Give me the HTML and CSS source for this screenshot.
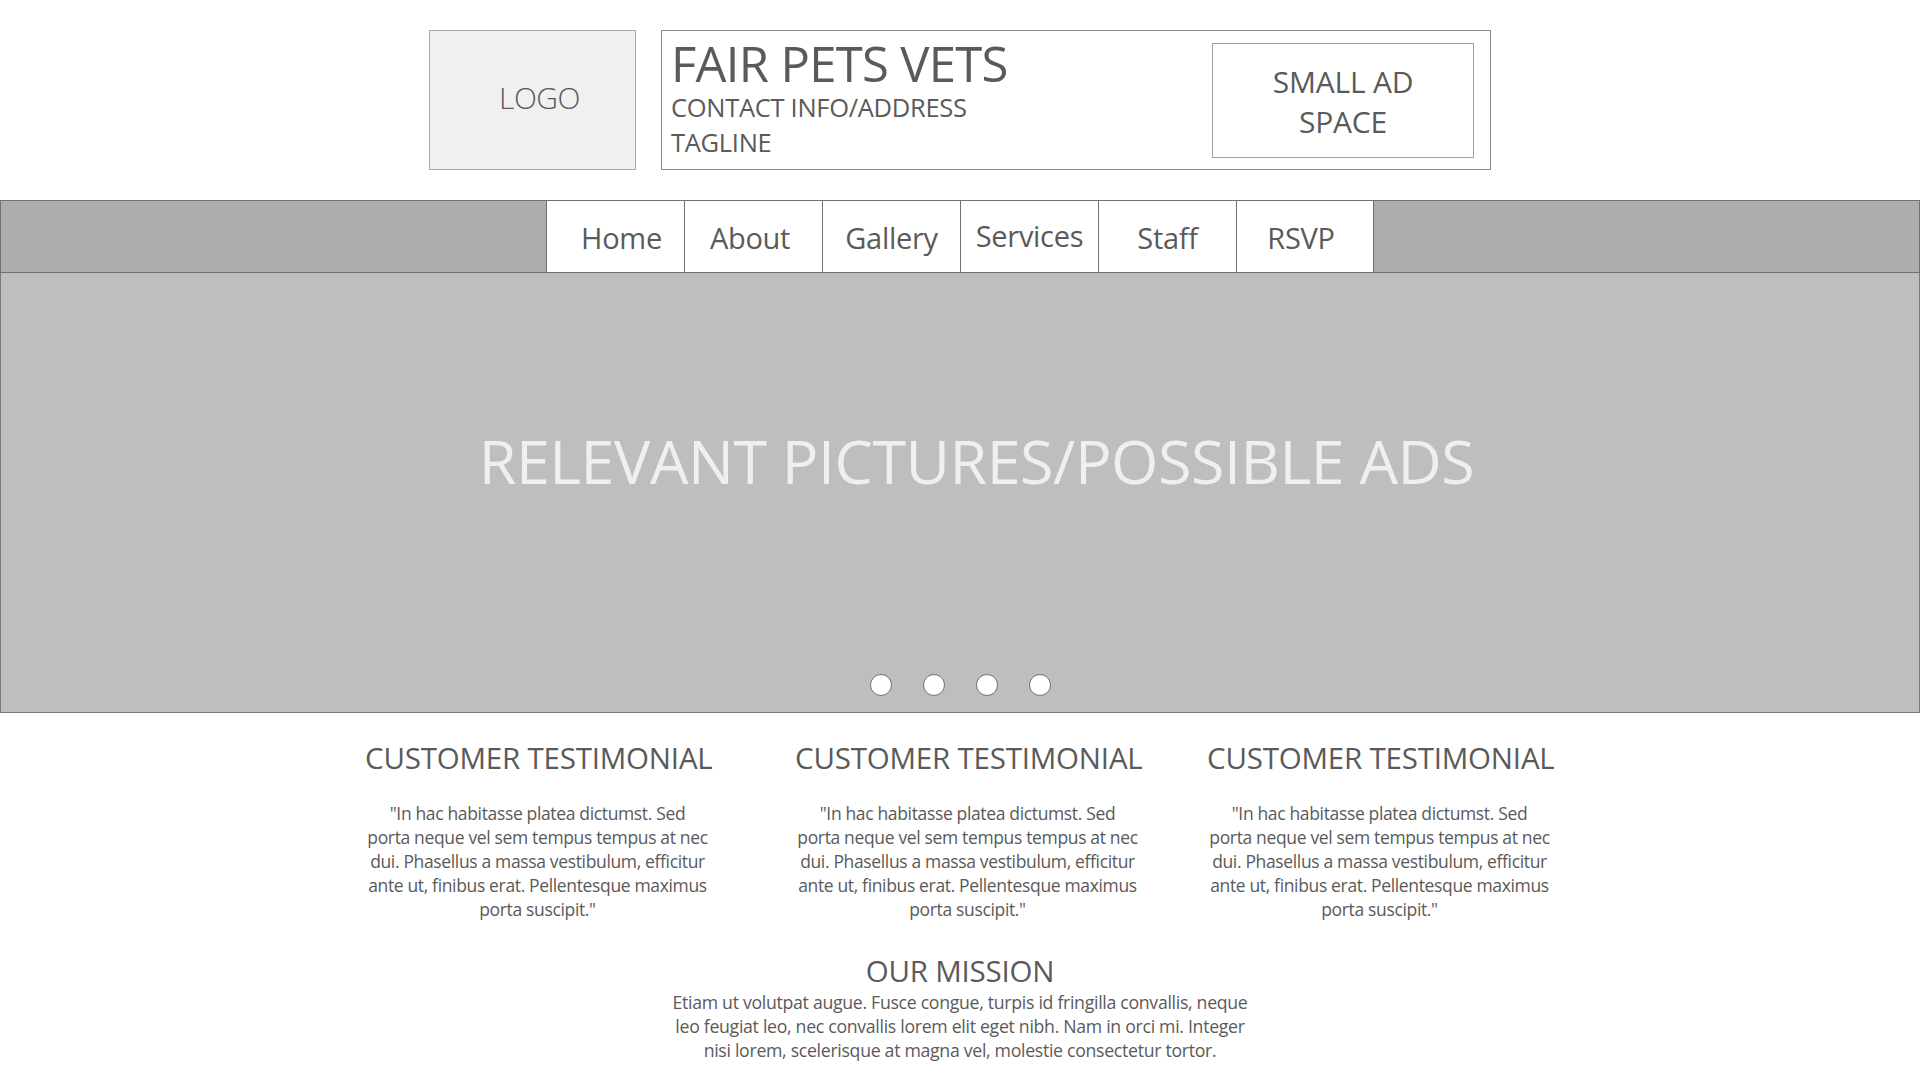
FILE: index.html
```html
<!DOCTYPE html>
<html lang="en">
<head>
<meta charset="utf-8">
<title>Fair Pets Vets</title>
<link rel="stylesheet" href="styles.css">
</head>
<body>
<header class="top">
  <div class="logo">LOGO</div>
  <div class="masthead">
    <div class="titles">
      <div class="site-name">FAIR PETS VETS</div>
      <div class="sub">CONTACT INFO/ADDRESS</div>
      <div class="sub">TAGLINE</div>
    </div>
    <div class="ad">SMALL AD<br>SPACE</div>
  </div>
</header>
<nav class="nav">
  <a class="nav-item nav-home" href="#">Home</a>
  <a class="nav-item nav-about" href="#">About</a>
  <a class="nav-item" href="#">Gallery</a>
  <a class="nav-item nav-up" href="#">Services</a>
  <a class="nav-item" href="#">Staff</a>
  <a class="nav-item nav-rsvp" href="#">RSVP</a>
</nav>
<section class="hero">
  <div class="hero-text">RELEVANT PICTURES/POSSIBLE ADS</div>
  <div class="dots">
    <span class="dot"></span><span class="dot"></span><span class="dot"></span><span class="dot"></span>
  </div>
</section>
<section class="testimonials">
  <div class="testimonial t1">
    <h2 class="t-head">CUSTOMER TESTIMONIAL</h2>
    <p class="t-body">"In hac habitasse platea dictumst. Sed<br>porta neque vel sem tempus tempus at nec<br>dui. Phasellus a massa vestibulum, efficitur<br>ante ut, finibus erat. Pellentesque maximus<br>porta suscipit."</p>
  </div>
  <div class="testimonial t2">
    <h2 class="t-head">CUSTOMER TESTIMONIAL</h2>
    <p class="t-body">"In hac habitasse platea dictumst. Sed<br>porta neque vel sem tempus tempus at nec<br>dui. Phasellus a massa vestibulum, efficitur<br>ante ut, finibus erat. Pellentesque maximus<br>porta suscipit."</p>
  </div>
  <div class="testimonial t3">
    <h2 class="t-head">CUSTOMER TESTIMONIAL</h2>
    <p class="t-body">"In hac habitasse platea dictumst. Sed<br>porta neque vel sem tempus tempus at nec<br>dui. Phasellus a massa vestibulum, efficitur<br>ante ut, finibus erat. Pellentesque maximus<br>porta suscipit."</p>
  </div>
</section>
<section class="mission">
  <h2 class="m-head">OUR MISSION</h2>
  <p class="m-body">Etiam ut volutpat augue. Fusce congue, turpis id fringilla convallis, neque<br>leo feugiat leo, nec convallis lorem elit eget nibh. Nam in orci mi. Integer<br>nisi lorem, scelerisque at magna vel, molestie consectetur tortor.</p>
</section>
</body>
</html>
```
FILE: styles.css
```css
* { box-sizing: border-box; }
html, body { margin: 0; padding: 0; background: #ffffff; }
body {
  font-family: "Open Sans", "Noto Sans", sans-serif;
  color: #5a5a5a;
  width: 1920px;
  height: 1080px;
  overflow: hidden;
}

.top {
  display: flex;
  justify-content: center;
  gap: 25px;
  padding-top: 30px;
  height: 170px;
}
.logo {
  width: 207px;
  height: 140px;
  border: 1px solid #a6a6a6;
  background: #f0f0f0;
  display: flex;
  align-items: center;
  justify-content: center;
  padding: 0 0 6px 14px;
  font-size: 30px;
  font-weight: 300;
  letter-spacing: -0.5px;
}
.masthead {
  width: 830px;
  height: 140px;
  border: 1px solid #8c8c8c;
  display: flex;
  justify-content: space-between;
  align-items: flex-start;
  padding: 6px 16px 0 9px;
}
.site-name {
  font-size: 49px;
  line-height: 53px;
  font-weight: 400;
  letter-spacing: -0.7px;
}
.sub {
  font-size: 25.5px;
  line-height: 35px;
  font-weight: 400;
  letter-spacing: -0.3px;
}
.ad {
  margin-top: 6px;
  width: 262px;
  height: 115px;
  border: 1px solid #a0a0a0;
  display: flex;
  align-items: center;
  justify-content: center;
  text-align: center;
  padding-top: 2px;
  font-size: 30px;
  line-height: 40px;
  font-weight: 400;
  letter-spacing: -0.2px;
}

.nav {
  margin-top: 30px;
  height: 73px;
  background: #adadad;
  border: 1px solid #707070;
  display: flex;
  justify-content: center;
}
.nav-item {
  width: 138px;
  height: 71px;
  background: #ffffff;
  border-left: 1px solid #707070;
  display: flex;
  align-items: center;
  justify-content: center;
  padding-top: 1px;
  font-size: 29px;
  color: #5a5a5a;
  text-decoration: none;
  letter-spacing: -0.3px;
}
.nav-item:last-child { border-right: 1px solid #707070; }
.nav-home { padding-left: 12px; }
.nav-about { padding-right: 7px; }
.nav-rsvp { padding-right: 8px; }
.nav-up { padding-top: 0; padding-bottom: 2px; }

.hero {
  height: 440px;
  background: #bebebe;
  border: 1px solid #7a7a7a;
  border-top: 0;
  display: flex;
  flex-direction: column;
  align-items: center;
  padding: 148px 0 16px;
}
.hero-text {
  font-size: 61px;
  line-height: 80px;
  color: #efefef;
  font-weight: 400;
  letter-spacing: -0.5px;
  padding-left: 33px;
}
.dots {
  margin-top: auto;
  display: flex;
  gap: 31px;
}
.dot {
  width: 22px;
  height: 22px;
  border-radius: 50%;
  background: #ffffff;
  border: 1.5px solid #727272;
}

.testimonials {
  display: flex;
  justify-content: center;
  padding-top: 27px;
  padding-right: 3px;
}
.testimonial {
  width: 345px;
  text-align: center;
}
.t2 { margin-left: 85px; }
.t3 { margin-left: 67px; }
.t-head {
  margin: 0;
  font-size: 29.5px;
  line-height: 36px;
  font-weight: 400;
  letter-spacing: -0.2px;
  white-space: nowrap;
}
.t-body {
  margin: 25px -20px 0;
  font-size: 17.5px;
  line-height: 24px;
  letter-spacing: -0.35px;
  white-space: nowrap;
}

.mission {
  text-align: center;
  padding-top: 32px;
}
.m-head {
  margin: 0;
  font-size: 29.5px;
  line-height: 36px;
  font-weight: 400;
  letter-spacing: -0.2px;
}
.m-body {
  margin: 1px auto 0;
  width: 640px;
  font-size: 17.7px;
  line-height: 24px;
  letter-spacing: -0.3px;
  white-space: nowrap;
}
```
